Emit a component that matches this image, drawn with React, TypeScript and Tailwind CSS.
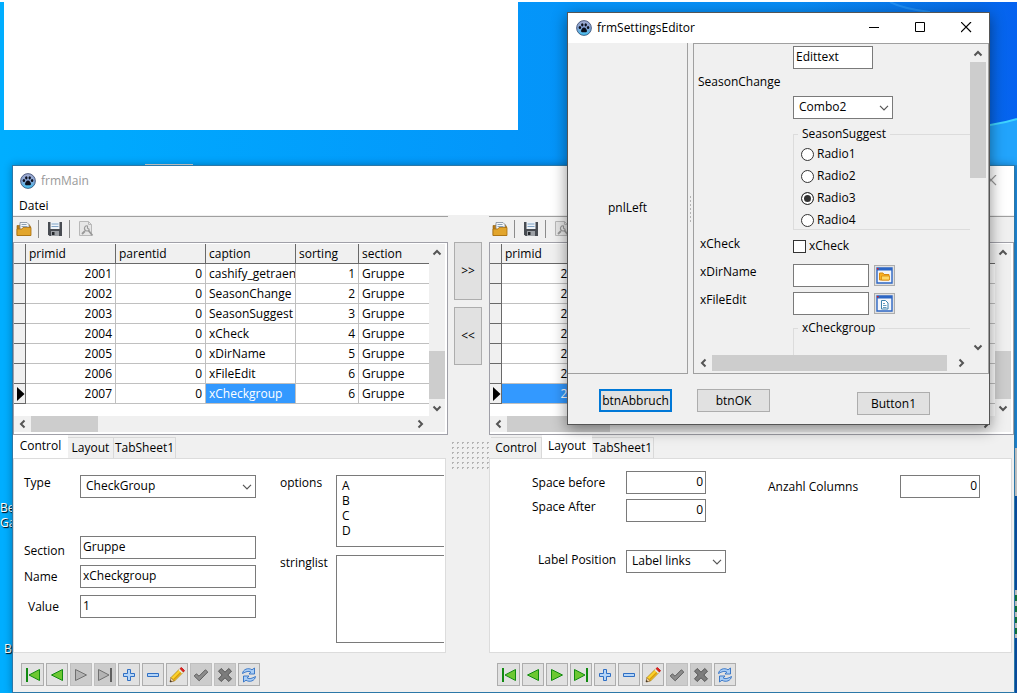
import { useState } from 'react'
import type { ReactNode } from 'react'

const rows = [
  { id: 2001, parent: 0, caption: 'cashify_getraenke', sorting: 1, section: 'Gruppe' },
  { id: 2002, parent: 0, caption: 'SeasonChange', sorting: 2, section: 'Gruppe' },
  { id: 2003, parent: 0, caption: 'SeasonSuggest', sorting: 3, section: 'Gruppe' },
  { id: 2004, parent: 0, caption: 'xCheck', sorting: 4, section: 'Gruppe' },
  { id: 2005, parent: 0, caption: 'xDirName', sorting: 5, section: 'Gruppe' },
  { id: 2006, parent: 0, caption: 'xFileEdit', sorting: 6, section: 'Gruppe' },
  { id: 2007, parent: 0, caption: 'xCheckgroup', sorting: 6, section: 'Gruppe' },
]

const field = 'h-[23px] border border-[#7a7a7a] bg-white px-0.5 pb-0.5 outline-none'

// ---------- icons ----------

function Paw() {
  return (
    <svg width="16" height="16" viewBox="0 0 16 16" className="shrink-0">
      <defs>
        <linearGradient id="paw" x1="0" y1="0" x2="0" y2="1">
          <stop offset="0" stopColor="#a3acd0" />
          <stop offset="0.5" stopColor="#86a4d4" />
          <stop offset="1" stopColor="#3fc4f4" />
        </linearGradient>
      </defs>
      <circle cx="8" cy="8" r="7.4" fill="url(#paw)" stroke="#33456b" strokeWidth="0.8" />
      <g fill="#0b0f1c">
        <ellipse cx="3.900" cy="7.600" rx="1.200" ry="1.500" />
        <ellipse cx="6.300" cy="4.800" rx="1.200" ry="1.600" />
        <ellipse cx="9.700" cy="4.800" rx="1.200" ry="1.600" />
        <ellipse cx="12.100" cy="7.600" rx="1.200" ry="1.500" />
        <path d="M8 7.400c1.500 0 3 2.200 3 3.500s-1.500 1.300-3 1.300-3 0-3-1.300 1.500-3.500 3-3.500z" />
      </g>
    </svg>
  )
}

function OpenIcon() {
  return (
    <svg width="16" height="16" viewBox="0 0 16 16">
      <path d="M1 4.500h3v-1h9l1.500 2v9H1z" fill="#b87a14" stroke="#8f5c0a" strokeWidth="0.6" />
      <path d="M4 1.500h7l2 2V9H4z" fill="#f4f6f8" stroke="#7d8a99" strokeWidth="0.8" />
      <path d="M5.500 3.500h5M5.500 5.500h6" stroke="#7f97ae" strokeWidth="0.9" />
      <path d="M1 8h5l1-1.500h8V14.500H1z" fill="#e2a52c" stroke="#a86e0e" strokeWidth="0.8" />
    </svg>
  )
}

function SaveIcon() {
  return (
    <svg width="16" height="16" viewBox="0 0 16 16">
      <path d="M1 1h14v14H2.500L1 13.500z" fill="#484c52" />
      <path d="M3.500 1h9v7h-9z" fill="#eef3f8" />
      <path d="M4.500 3h7M4.500 5.500h7" stroke="#7fa2c4" strokeWidth="1" />
      <path d="M4 10h8v5H4z" fill="#9da1a6" />
      <path d="M5 11h2.500v3H5z" fill="#24272b" />
    </svg>
  )
}

function WrenchIcon() {
  return (
    <svg width="16" height="16" viewBox="0 0 16 16" fill="none">
      <path d="M1.500.5h9l3 3v11h-12z" fill="#e6e6e6" stroke="#b8b8b8" />
      <path d="M10.500.5v3h3" stroke="#b8b8b8" />
      <path d="M9.500 4.800a2.600 2.600 0 1 0 1.900 3.700M9.500 4.800v2.400l1.900 1.300" stroke="#999" strokeWidth="1.100" />
      <path d="M10.500 9.500l4 5M4 13l3-3" stroke="#999" strokeWidth="1.800" />
    </svg>
  )
}

function FolderPickIcon() {
  return (
    <svg width="17" height="17" viewBox="0 0 17 17">
      <path d="M1 1h15v15H1z" fill="#f2f5fa" stroke="#2d66c4" strokeWidth="1.400" />
      <path d="M1 1h15v2.500H1z" fill="#2d66c4" />
      <path d="M1 1h1.500v1.500H1z" fill="#e02020" />
      <path d="M3.500 13V6h3.500l1 1.500h5V13z" fill="#f9b223" stroke="#d88a10" />
      <path d="M5.500 9h8v4h-8z" fill="#ffd968" stroke="#d88a10" strokeWidth="0.800" />
    </svg>
  )
}

function FilePickIcon() {
  return (
    <svg width="17" height="17" viewBox="0 0 17 17">
      <path d="M1 1h15v15H1z" fill="#f2f5fa" stroke="#2d66c4" strokeWidth="1.400" />
      <path d="M1 1h15v2.500H1z" fill="#2d66c4" />
      <path d="M1 1h1.500v1.500H1z" fill="#e02020" />
      <path d="M5.500 5.500h4l2.500 2.500v6H5.500z" fill="#fff" stroke="#3f83ad" />
      <path d="M7 8.500h2M7 10.500h3.500M7 12.500h3.500" stroke="#3f83ad" strokeWidth="0.800" />
    </svg>
  )
}

type Dir = 'up' | 'down' | 'left' | 'right'

const arrowPaths: Record<Dir, string> = {
  up: 'M1.500 6.500L5 3l3.500 3.500',
  down: 'M1.500 3.500L5 7l3.500-3.500',
  left: 'M6.500 1.500L3 5l3.500 3.500',
  right: 'M3.500 1.500L7 5 3.500 8.500',
}

function Arrow({ dir }: { dir: Dir }) {
  return (
    <span className="flex size-[17px] shrink-0 items-center justify-center">
      <svg width="10" height="10" viewBox="0 0 10 10">
        <path d={arrowPaths[dir]} fill="none" stroke="#555" strokeWidth="2" />
      </svg>
    </span>
  )
}

const green = { fill: '#6cc832', stroke: '#118a11', strokeWidth: 1 }
const gray = { fill: '#b4b4b4', stroke: '#707070', strokeWidth: 1 }

function NavIcon({ name, off }: { name: string; off?: boolean }) {
  const c = off ? gray : green
  const bar = off ? '#606060' : '#118a11'
  return (
    <svg width="16" height="16" viewBox="0 0 16 16">
      {name === 'first' && (
        <>
          <path d="M14.500 2.500v11L4 8z" {...c} />
          <path d="M2 1v14" stroke={bar} strokeWidth="2" />
        </>
      )}
      {name === 'prior' && <path d="M13.500 2.500v11L2.500 8z" {...c} />}
      {name === 'next' && <path d="M2.500 2.500v11L13.500 8z" {...c} />}
      {name === 'last' && (
        <>
          <path d="M1.500 2.500v11L12 8z" {...c} />
          <path d="M14 1v14" stroke={bar} strokeWidth="2" />
        </>
      )}
      {name === 'insert' && (
        <path d="M6.500 2.500h3v4h4v3h-4v4h-3v-4h-4v-3h4z" fill="#b5d5f7" stroke="#2f6fc4" />
      )}
      {name === 'delete' && <path d="M2.500 6.500h11v3h-11z" fill="#b5d5f7" stroke="#2f6fc4" />}
      {name === 'edit' && (
        <>
          <path d="M1 15l1-4.500 3.500 3.500z" fill="#f3d7a8" stroke="#8a5a1a" strokeWidth="0.700" />
          <path d="M1 15l.5-2 1.500 1.500z" fill="#222" />
          <path d="M2 10.500L10.500 2l3.500 3.500L5.500 14z" fill="#fbd22c" stroke="#a87b0a" strokeWidth="0.700" />
          <path d="M4.500 12.800l8.500-8.500" stroke="#d99a0c" strokeWidth="1.400" />
          <path d="M10 2.500l3.500 3.500" stroke="#e8e8e8" strokeWidth="1.600" />
          <path d="M11 1.500L12.500.5l3 3-1 1.500z" fill="#e81c1c" stroke="#b80c0c" strokeWidth="0.700" />
        </>
      )}
      {name === 'post' && (
        <path d="M1.200 9l2.200-2.200 2.600 2.400 6.400-6.400L14.800 5 6.200 13.800z" fill="#8c8c8c" stroke="#5e5e5e" />
      )}
      {name === 'cancel' && (
        <path
          d="M1.500 4.200l2.700-2.700L8 5.200l3.800-3.700 2.700 2.700L10.800 8l3.700 3.800-2.700 2.700L8 10.800l-3.800 3.700-2.700-2.700L5.200 8z"
          fill="#7c7c7c"
          stroke="#565656"
        />
      )}
      {name === 'refresh' && (
        <g fill="#a9cdf5" stroke="#2f6fc4" strokeWidth="0.900">
          <path d="M1.500 6.500C2 2.500 7 .2 11 2.800L13.500 1v6H8l1.800-2C7.500 3.600 5 4.600 1.500 6.500z" />
          <path d="M14.500 9.500C14 13.500 9 15.800 5 13.200L2.500 15V9H8l-1.800 2c2.300 1.400 4.800.4 8.300-1.500z" />
        </g>
      )}
    </svg>
  )
}

// ---------- shared controls ----------

function CaptionButtons({ inactive }: { inactive?: boolean }) {
  const btn = 'flex h-full w-[46px] items-center justify-center'
  const stroke = inactive ? '#999' : '#000'
  return (
    <div className="ml-auto flex h-full pb-0.5">
      <button aria-label="Minimize" className={btn}>
        <svg width="11" height="11"><path d="M0 5.500h10" stroke={stroke} /></svg>
      </button>
      <button aria-label="Maximize" className={btn}>
        <svg width="11" height="11"><path d="M.5.5h9v9H.5z" fill="none" stroke={stroke} /></svg>
      </button>
      <button aria-label="Close" className={btn}>
        <svg width="11" height="11"><path d="M0 0l10 10M10 0l-10 10" stroke={stroke} strokeWidth="1.200" /></svg>
      </button>
    </div>
  )
}

function Combo({ id, options, className }: { id: string; options: string[]; className: string }) {
  return (
    <div className={`relative ${className}`}>
      <select
        id={id}
        className="block h-[23px] w-full appearance-none border border-[#7a7a7a] bg-white pb-0.5 pl-[5px] outline-none"
      >
        {options.map((o) => (
          <option key={o}>{o}</option>
        ))}
      </select>
      <svg width="10" height="6" className="pointer-events-none absolute top-[9px] right-1">
        <path d="M1 .8l4 4 4-4" fill="none" stroke="#555" strokeWidth="1.200" />
      </svg>
    </div>
  )
}

function HScroll({ thumb }: { thumb: string }) {
  return (
    <div className="flex h-4 items-center bg-[#f0f0f0]">
      <Arrow dir="left" />
      <div className={`h-full bg-[#cdcdcd] ${thumb}`} />
      <span className="flex-1" />
      <Arrow dir="right" />
      <span className="w-[17px]" />
    </div>
  )
}

function ToolBar() {
  return (
    <div className="mt-px flex h-[26px] items-center border-t border-[#a0a0a0] pb-0.5 pl-[3px]">
      <button aria-label="Open"><OpenIcon /></button>
      <span className="mx-1.5 h-[18px] w-px bg-[#8c8c8c]" />
      <button aria-label="Save" className="pl-0.5"><SaveIcon /></button>
      <span className="mx-1.5 h-[18px] w-px bg-[#8c8c8c]" />
      <button aria-label="Configure" className="pl-0.5" disabled><WrenchIcon /></button>
    </div>
  )
}

function DataGrid({ selected, thumb }: { selected: 'id' | 'caption'; thumb: string }) {
  const num = 'border-r border-b border-[#c0c0c0] pr-[3px] text-right'
  const text = 'overflow-hidden border-r border-b border-[#c0c0c0] pl-[3px]'
  const head = 'border-r border-b border-[#696969] pl-[3px] text-left font-normal'
  const sel = ' bg-[#3399ff] text-white'
  return (
    <div className="h-[193px] border border-[#a0a0a8] bg-white pt-px pr-0.5">
      <div className="flex h-[172px]">
        <div className="min-w-0 flex-1 overflow-hidden">
          <table className="w-full table-fixed border-separate border-spacing-0 whitespace-nowrap">
            <thead>
              <tr className="h-5 bg-[#f0f0f0]">
                <th className="w-3 border-r border-b border-[#696969]" />
                <th className={`w-[90px] ${head}`}>primid</th>
                <th className={`w-[90px] ${head}`}>parentid</th>
                <th className={`w-[90px] ${head}`}>caption</th>
                <th className={`w-[63px] ${head}`}>sorting</th>
                <th className="border-b border-[#696969] pl-[3px] text-left font-normal">section</th>
              </tr>
            </thead>
            <tbody>
              {rows.map((r) => {
                const active = r.id === 2007
                return (
                  <tr key={r.id} className="h-5">
                    <td className="border-r border-b border-[#696969] bg-[#f0f0f0]">
                      {active && (
                        <svg width="8" height="14" className="ml-[3px] block">
                          <path d="M0 0l7.500 7L0 14z" fill="#000" />
                        </svg>
                      )}
                    </td>
                    <td className={num + (active && selected === 'id' ? sel : '')}>{r.id}</td>
                    <td className={num}>{r.parent}</td>
                    <td className={text + (active && selected === 'caption' ? sel : '')}>{r.caption}</td>
                    <td className={num}>{r.sorting}</td>
                    <td className="border-b border-[#c0c0c0] pl-[3px]">{r.section}</td>
                  </tr>
                )
              })}
            </tbody>
          </table>
        </div>
        <div className="flex w-4 flex-col items-center bg-[#f0f0f0]">
          <Arrow dir="up" />
          <span className="flex-1" />
          <div className="h-12 w-full bg-[#cdcdcd]" />
          <Arrow dir="down" />
        </div>
      </div>
      <HScroll thumb={thumb} />
    </div>
  )
}

function Tabs({ active, onChange }: { active: string; onChange: (t: string) => void }) {
  const tabs = [
    { name: 'Control', off: 'w-[51px]', on: 'w-[55px]' },
    { name: 'Layout', off: 'w-[46px]', on: 'w-[50px]' },
    { name: 'TabSheet1', off: 'w-[62px]', on: 'w-[66px]' },
  ]
  return (
    <div role="tablist" className="flex h-[23px] items-end pl-0.5">
      {tabs.map((t) => (
        <button
          key={t.name}
          role="tab"
          aria-selected={t.name === active}
          onClick={() => onChange(t.name)}
          className={
            t.name === active
              ? `h-[23px] bg-white pb-0.5 first:-ml-0.5 ${t.on}`
              : `h-[21px] border border-b-0 border-l-0 border-[#d9d9d9] bg-[#f0f0f0] ${t.off}`
          }
        >
          {t.name}
        </button>
      ))}
    </div>
  )
}

function Navigator({ disabled }: { disabled: string[] }) {
  const names = ['first', 'prior', 'next', 'last', 'insert', 'delete', 'edit', 'post', 'cancel', 'refresh']
  return (
    <div className="flex h-[39px] gap-0.5 pt-2.5 pl-2">
      {names.map((n) => {
        const off = disabled.includes(n)
        return (
          <button
            key={n}
            aria-label={n}
            disabled={off}
            className={`flex h-[23px] w-[22px] items-center justify-center border first:w-[23px] ${
              off ? 'border-[#bfbfbf] bg-[#cccccc]' : 'border-[#adadad] bg-[#e1e1e1]'
            }`}
          >
            <NavIcon name={n} off={off} />
          </button>
        )
      })}
    </div>
  )
}

function Page({ children }: { children: ReactNode }) {
  return <div className="mr-0.5 flex-1 overflow-hidden border border-[#dcdcdc] bg-white">{children}</div>
}

// ---------- tab pages ----------

function ControlPage() {
  return (
    <div className="flex pt-4">
      <div className="flex w-[242px] shrink-0 flex-col pl-2.5">
        <div className="flex h-[23px] items-start">
          <label htmlFor="type" className="w-14">Type</label>
          <Combo id="type" options={['CheckGroup']} className="w-44" />
        </div>
        <div className="mt-[38px] flex h-[23px] items-end">
          <label htmlFor="section" className="w-14">Section</label>
          <input id="section" defaultValue="Gruppe" className={`w-44 ${field}`} />
        </div>
        <div className="mt-1.5 flex h-[23px] items-center">
          <label htmlFor="name" className="w-14">Name</label>
          <input id="name" defaultValue="xCheckgroup" className={`w-44 ${field}`} />
        </div>
        <div className="mt-[7px] flex h-[23px] items-center">
          <label htmlFor="value" className="w-14 pl-1">Value</label>
          <input id="value" defaultValue="1" className={`w-44 ${field}`} />
        </div>
      </div>
      <div className="flex min-w-0 flex-1 flex-col gap-2 pr-px pl-6">
        <div className="flex">
          <label htmlFor="options" className="w-14 shrink-0">options</label>
          <textarea
            id="options"
            defaultValue={'A\nB\nC\nD'}
            className="h-[72px] min-w-0 flex-1 resize-none border border-r-0 border-[#7a7a7a] px-[5px] py-0.5 leading-[15px] outline-none"
          />
        </div>
        <div className="flex">
          <label htmlFor="stringlist" className="w-14 shrink-0">stringlist</label>
          <textarea
            id="stringlist"
            className="h-[88px] min-w-0 flex-1 resize-none border border-r-0 border-[#7a7a7a] outline-none"
          />
        </div>
      </div>
    </div>
  )
}

function LayoutPage() {
  return (
    <div className="flex justify-between pt-3">
      <div className="pl-[42px]">
        <div className="flex">
          <label htmlFor="before" className="w-[94px] pt-1">Space before</label>
          <input id="before" defaultValue="0" className={`w-20 text-right ${field}`} />
        </div>
        <div className="mt-[5px] flex">
          <label htmlFor="after" className="w-[94px]">Space After</label>
          <input id="after" defaultValue="0" className={`w-20 text-right ${field}`} />
        </div>
        <div className="mt-7 flex">
          <label htmlFor="labelpos" className="w-[94px] pt-0.5 pl-1.5">Label Position</label>
          <Combo id="labelpos" options={['Label links']} className="w-[100px]" />
        </div>
      </div>
      <div className="mt-1 flex h-[23px] items-center pr-[31px]">
        <label htmlFor="columns" className="w-[132px]">Anzahl Columns</label>
        <input id="columns" defaultValue="0" className={`w-20 text-right ${field}`} />
      </div>
    </div>
  )
}

type SideProps = {
  initialTab: string
  selected: 'id' | 'caption'
  thumb: string
  disabled: string[]
}

function Side({ initialTab, selected, thumb, disabled }: SideProps) {
  const [tab, setTab] = useState(initialTab)
  return (
    <>
      <ToolBar />
      <DataGrid selected={selected} thumb={thumb} />
      <Tabs active={tab} onChange={setTab} />
      <Page>
        {tab === 'Control' && <ControlPage />}
        {tab === 'Layout' && <LayoutPage />}
      </Page>
      <Navigator disabled={disabled} />
    </>
  )
}

// ---------- windows ----------

function MainWindow() {
  const move = 'block h-[58px] w-7 border border-[#adadad] bg-[#e1e1e1]'
  return (
    <section className="absolute top-[163px] right-0.5 bottom-0 left-3 flex flex-col border border-[#2c78a8] bg-[#f0f0f0] shadow-[0_0_8px_rgba(0,0,0,0.3)]">
      <div className="flex h-[30px] shrink-0 items-center gap-[5px] bg-white pl-[7px] text-[#999]">
        <Paw />
        <span>frmMain</span>
        <CaptionButtons inactive />
      </div>
      <nav className="flex h-[19px] shrink-0 items-center bg-white pl-1.5">
        <button>Datei</button>
      </nav>
      <div className="flex min-h-0 flex-1">
        <div className="flex w-[435px] shrink-0 flex-col">
          <Side initialTab="Control" selected="caption" thumb="w-[67px]" disabled={['next', 'last', 'post', 'cancel']} />
        </div>
        <div className="flex w-[41px] shrink-0 flex-col gap-[7px] pt-[27px] pl-1.5">
          <button className={move}>&gt;&gt;</button>
          <button className={move}>&lt;&lt;</button>
          <div className="mt-[68px] -ml-1 h-[30px] bg-[radial-gradient(#b4b4b4_1px,transparent_1px)] bg-[size:5px_5px]" />
        </div>
        <div className="flex min-w-0 flex-1 flex-col">
          <Side initialTab="Layout" selected="id" thumb="w-[103px]" disabled={['post', 'cancel']} />
        </div>
      </div>
    </section>
  )
}

function SettingsForm() {
  const pick = 'ml-[5px] mt-px flex size-[21px] items-center justify-center border border-[#adadad] bg-[#e1e1e1]'
  const group = 'ml-[98px] border border-r-0 border-[#dcdcdc]'
  return (
    <div className="min-w-0 flex-1 overflow-hidden pt-px">
      <input aria-label="Edittext" defaultValue="Edittext" className={`ml-[98px] block w-20 ${field}`} />
      <label htmlFor="season" className="block h-[27px] pt-[5px] pl-[3px]">SeasonChange</label>
      <Combo id="season" options={['Combo2']} className="ml-[98px] w-[100px]" />
      <fieldset className={`mt-[7px] h-[104px] ${group}`}>
        <legend className="ml-1 px-1">SeasonSuggest</legend>
        <div className="flex flex-col gap-1.5 pt-1 pl-[7px]">
          {['Radio1', 'Radio2', 'Radio3', 'Radio4'].map((r) => (
            <label key={r} className="flex h-4 items-center gap-[3px]">
              <input
                type="radio"
                name="suggest"
                defaultChecked={r === 'Radio3'}
                className="size-[13px] appearance-none rounded-full border border-[#333] bg-white checked:border-[#333] checked:bg-[#333] checked:shadow-[inset_0_0_0_2px_#fff]"
              />
              {r}
            </label>
          ))}
        </div>
      </fieldset>
      <div className="mt-1.5 flex">
        <span className="w-[98px] pl-[5px]">xCheck</span>
        <label className="flex items-center gap-[3px] pt-0.5">
          <input type="checkbox" className="size-[13px] appearance-none border border-[#333] bg-white checked:bg-[#333]" />
          xCheck
        </label>
      </div>
      <div className="mt-2.5 flex">
        <label htmlFor="dir" className="w-[98px] pl-[5px]">xDirName</label>
        <input id="dir" className={`w-[76px] ${field}`} />
        <button aria-label="Browse folder" className={pick}><FolderPickIcon /></button>
      </div>
      <div className="mt-[5px] flex">
        <label htmlFor="file" className="w-[98px] pl-[5px]">xFileEdit</label>
        <input id="file" className={`w-[76px] ${field}`} />
        <button aria-label="Browse file" className={pick}><FilePickIcon /></button>
      </div>
      <fieldset className={`mt-[5px] h-20 ${group}`}>
        <legend className="ml-1 px-1">xCheckgroup</legend>
      </fieldset>
    </div>
  )
}

function SettingsWindow() {
  const btn = 'h-[23px] w-[73px] bg-[#e1e1e1]'
  return (
    <section className="absolute top-2.5 right-[27px] w-[423px] border border-[#555] bg-[#f0f0f0] shadow-[0_4px_14px_rgba(0,0,0,0.45)]">
      <div className="flex h-[30px] items-center gap-[5px] bg-white pl-2">
        <Paw />
        <span>frmSettingsEditor</span>
        <CaptionButtons />
      </div>
      <div className="flex h-[331px]">
        <div className="flex w-[120px] items-center justify-center border-r border-b border-[#a0a0a0]">pnlLeft</div>
        <div className="flex w-[5px] items-center">
          <div className="ml-px h-7 w-[3px] bg-[radial-gradient(#b4b4b4_1px,transparent_1px)] bg-[size:3px_4px]" />
        </div>
        <div className="flex min-w-0 flex-1 flex-col border border-[#a0a0a0] pt-px pr-0.5 pb-0.5 pl-px">
          <div className="flex min-h-0 flex-1">
            <SettingsForm />
            <div className="flex w-4 flex-col items-center">
              <Arrow dir="up" />
              <div className="h-[116px] w-full bg-[#cdcdcd]" />
              <span className="flex-1" />
              <Arrow dir="down" />
            </div>
          </div>
          <HScroll thumb="w-[235px]" />
        </div>
      </div>
      <div className="flex h-[50px] pt-[15px] pl-[31px]">
        <button className={`border-2 border-[#0078d7] ${btn}`}>btnAbbruch</button>
        <button className={`ml-[25px] border border-[#adadad] ${btn}`}>btnOK</button>
        <button className={`mt-[3px] ml-[87px] border border-[#adadad] ${btn}`}>Button1</button>
      </div>
    </section>
  )
}

function Wallpaper() {
  return (
    <>
      <svg className="absolute top-0 right-0" width="217" height="180" viewBox="0 0 217 180">
        <defs>
          <linearGradient id="sky" x1="0" y1="0" x2="1" y2="0">
            <stop offset="0" stopColor="#0664e4" stopOpacity="0" />
            <stop offset="0.7" stopColor="#0664e4" stopOpacity="0.7" />
            <stop offset="1" stopColor="#0562f0" />
          </linearGradient>
        </defs>
        <path d="M0 0h217v180H0z" fill="url(#sky)" />
        <path d="M90 0q14 7 40 10" fill="none" stroke="#2f9cf8" strokeOpacity="0.6" strokeWidth="2" />
        <path d="M160 126Q195 124 217 117v63h-57z" fill="#22a4fc" />
        <path d="M160 126Q195 124 217 117" fill="none" stroke="#3fd4ff" strokeWidth="2" />
      </svg>
      <div className="absolute top-0 left-1 h-32 w-[514px] bg-white" />
      <div className="absolute top-[162px] left-[145px] h-px w-12 bg-[#d8d8d8]" />
      <div className="absolute top-[498px] left-0 leading-[15px] text-white [text-shadow:1px_1px_1px_#000]">
        Be
        <br />
        Ga
      </div>
      <div className="absolute top-[639px] left-1 text-white [text-shadow:1px_1px_1px_#000]">B</div>
      <div className="absolute top-[163px] right-0 bottom-0 flex w-0.5 flex-col bg-[#0a56b0]">
        <span className="h-[283px] bg-[#1f8fe4]" />
        <span className="h-12 bg-[#d8d8d8]" />
        <span className="h-[94px]" />
        <span className="h-12 bg-[repeating-linear-gradient(#d8d8d8_0_5px,#118040_5px_11px)]" />
      </div>
    </>
  )
}

export default function App() {
  return (
    <div className="flex h-screen flex-col overflow-hidden bg-white pt-0.5 font-['Open_Sans','Noto_Sans',sans-serif] text-[12px] leading-4 text-black">
      <main className="relative flex-1 bg-linear-to-r from-[#00aeff] via-[#0496fa] to-[#0a84f0]">
        <Wallpaper />
        <MainWindow />
        <SettingsWindow />
      </main>
    </div>
  )
}
